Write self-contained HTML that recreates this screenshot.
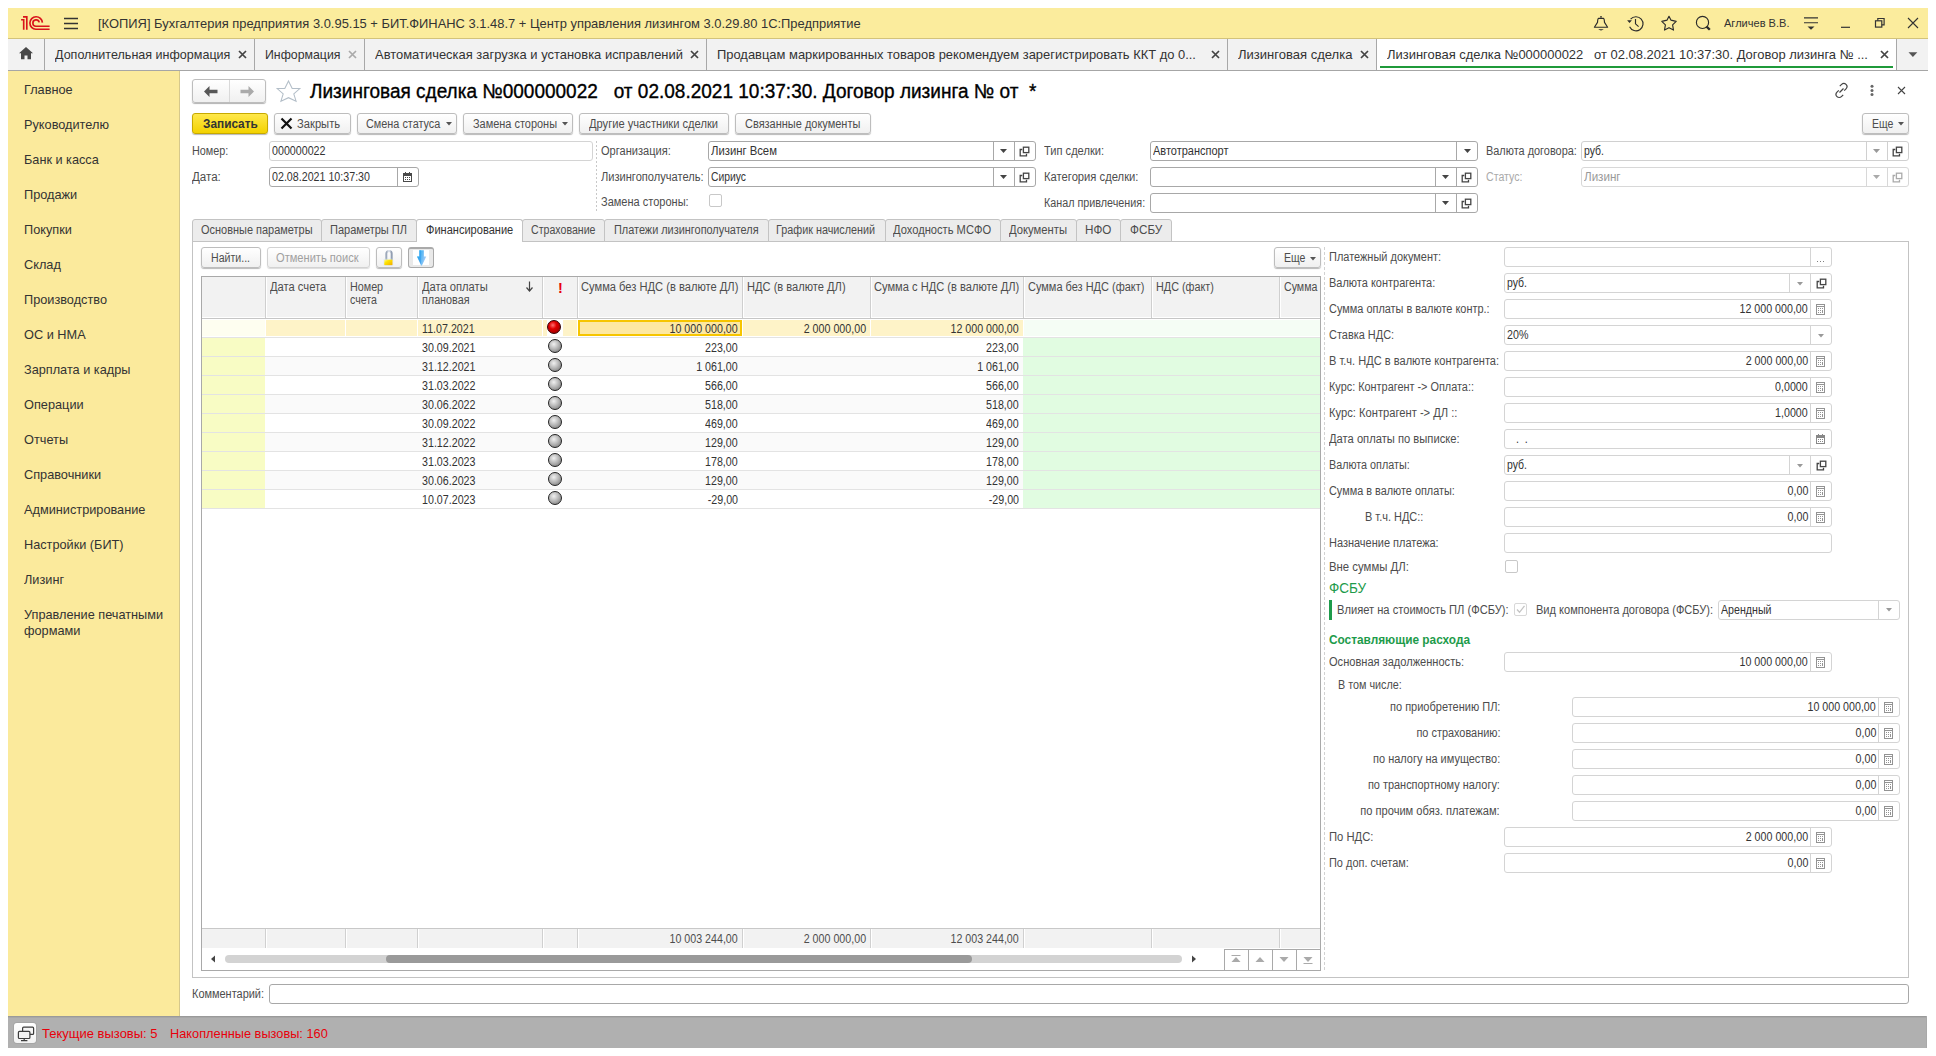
<!DOCTYPE html>
<html><head><meta charset="utf-8"><style>
html,body{margin:0;padding:0;background:#fff;width:1936px;height:1056px;overflow:hidden;position:relative;font-family:"Liberation Sans",sans-serif;}
.r{position:absolute;box-sizing:border-box;}
.t{position:absolute;white-space:pre;line-height:1;}
</style></head><body>
<div class="r" style="left:8px;top:8px;width:1920px;height:30px;background:#fbec9d;"></div>
<div class="r" style="left:8px;top:38px;width:1920px;height:1px;background:#d3c37b;"></div>
<div class="r" style="left:8px;top:39px;width:1920px;height:31px;background:#f2f2f2;"></div>
<div class="r" style="left:8px;top:70px;width:1920px;height:1px;background:#a6a6a6;"></div>
<div class="r" style="left:8px;top:71px;width:171px;height:945px;background:#fbea9c;"></div>
<div class="r" style="left:179px;top:71px;width:1px;height:945px;background:#d6c88c;"></div>
<div class="r" style="left:180px;top:71px;width:1748px;height:945px;background:#fff;"></div>
<div class="r" style="left:8px;top:1016px;width:1919px;height:32px;background:#b0b0b0;"></div>
<div class="r" style="left:1926px;top:1016px;width:1px;height:32px;background:#a9a9a9;"></div>
<div class="r" style="left:8px;top:1016px;width:1918px;height:1px;background:#9a9a9a;"></div>
<div class="r" style="left:8px;top:1017px;width:1918px;height:1px;background:#a7a7a7;"></div>
<div class="t" style="top:16.57px;font-size:13.5px;color:#333;transform:scaleX(0.9564);transform-origin:0 0;left:98px;">[КОПИЯ] Бухгалтерия предприятия 3.0.95.15 + БИТ.ФИНАНС 3.1.48.7 + Центр управления лизингом 3.0.29.80 1С:Предприятие</div>
<div class="t" style="top:17.69px;font-size:11px;color:#333;transform:scaleX(1.0037);transform-origin:0 0;left:1724px;">Агличев В.В.</div>
<div class="r" style="left:1377px;top:39px;width:519px;height:31px;background:#fff;"></div>
<div class="r" style="left:254px;top:39px;width:1px;height:31px;background:#a8a8a8;"></div>
<div class="t" style="top:48.00px;font-size:13px;color:#333;transform:scaleX(0.9651);transform-origin:0 0;left:55px;">Дополнительная информация</div>
<svg class="r" style="left:237.5px;top:49.6px" width="9" height="9" viewBox="0 0 9 9"><path d="M1 1L8 8M8 1L1 8" stroke="#444" stroke-width="1.7"/></svg>
<div class="r" style="left:364px;top:39px;width:1px;height:31px;background:#a8a8a8;"></div>
<div class="t" style="top:48.00px;font-size:13px;color:#333;transform:scaleX(0.9483);transform-origin:0 0;left:265px;">Информация</div>
<svg class="r" style="left:347.5px;top:49.6px" width="9" height="9" viewBox="0 0 9 9"><path d="M1 1L8 8M8 1L1 8" stroke="#aaa" stroke-width="1.7"/></svg>
<div class="r" style="left:706px;top:39px;width:1px;height:31px;background:#a8a8a8;"></div>
<div class="t" style="top:48.00px;font-size:13px;color:#333;transform:scaleX(0.9954);transform-origin:0 0;left:375px;">Автоматическая загрузка и установка исправлений</div>
<svg class="r" style="left:689.5px;top:49.6px" width="9" height="9" viewBox="0 0 9 9"><path d="M1 1L8 8M8 1L1 8" stroke="#444" stroke-width="1.7"/></svg>
<div class="r" style="left:1227px;top:39px;width:1px;height:31px;background:#a8a8a8;"></div>
<div class="t" style="top:48.00px;font-size:13px;color:#333;transform:scaleX(0.9937);transform-origin:0 0;left:717px;">Продавцам маркированных товаров рекомендуем зарегистрировать ККТ до 0...</div>
<svg class="r" style="left:1210.5px;top:49.6px" width="9" height="9" viewBox="0 0 9 9"><path d="M1 1L8 8M8 1L1 8" stroke="#444" stroke-width="1.7"/></svg>
<div class="r" style="left:1376px;top:39px;width:1px;height:31px;background:#a8a8a8;"></div>
<div class="t" style="top:48.00px;font-size:13px;color:#333;transform:scaleX(1.0019);transform-origin:0 0;left:1238px;">Лизинговая сделка</div>
<svg class="r" style="left:1359.5px;top:49.6px" width="9" height="9" viewBox="0 0 9 9"><path d="M1 1L8 8M8 1L1 8" stroke="#444" stroke-width="1.7"/></svg>
<div class="r" style="left:1896px;top:39px;width:1px;height:31px;background:#a8a8a8;"></div>
<div class="t" style="top:48.00px;font-size:13px;color:#333;transform:scaleX(0.9972);transform-origin:0 0;left:1387px;">Лизинговая сделка №000000022   от 02.08.2021 10:37:30. Договор лизинга № ...</div>
<svg class="r" style="left:1879.5px;top:49.6px" width="9" height="9" viewBox="0 0 9 9"><path d="M1 1L8 8M8 1L1 8" stroke="#444" stroke-width="1.7"/></svg>
<div class="r" style="left:44px;top:39px;width:1px;height:31px;background:#a8a8a8;"></div>
<div class="r" style="left:1380px;top:66px;width:513px;height:2px;background:#1f9a3a;"></div>
<div class="t" style="top:1027.00px;font-size:13px;color:#e8000b;letter-spacing:0px;left:42px;">Текущие вызовы: 5</div>
<div class="t" style="top:1027.00px;font-size:13px;color:#e8000b;transform:scaleX(0.9828);transform-origin:0 0;left:170px;">Накопленные вызовы: 160</div>
<div class="t" style="top:83.00px;font-size:13px;color:#333;transform:scaleX(0.9789);transform-origin:0 0;left:24px;">Главное</div>
<div class="t" style="top:118.00px;font-size:13px;color:#333;transform:scaleX(0.9792);transform-origin:0 0;left:24px;">Руководителю</div>
<div class="t" style="top:153.00px;font-size:13px;color:#333;transform:scaleX(0.9765);transform-origin:0 0;left:24px;">Банк и касса</div>
<div class="t" style="top:188.00px;font-size:13px;color:#333;transform:scaleX(0.9807);transform-origin:0 0;left:24px;">Продажи</div>
<div class="t" style="top:223.00px;font-size:13px;color:#333;transform:scaleX(0.9785);transform-origin:0 0;left:24px;">Покупки</div>
<div class="t" style="top:258.00px;font-size:13px;color:#333;transform:scaleX(0.9801);transform-origin:0 0;left:24px;">Склад</div>
<div class="t" style="top:293.00px;font-size:13px;color:#333;transform:scaleX(0.9788);transform-origin:0 0;left:24px;">Производство</div>
<div class="t" style="top:328.00px;font-size:13px;color:#333;transform:scaleX(0.9809);transform-origin:0 0;left:24px;">ОС и НМА</div>
<div class="t" style="top:363.00px;font-size:13px;color:#333;transform:scaleX(0.9779);transform-origin:0 0;left:24px;">Зарплата и кадры</div>
<div class="t" style="top:398.00px;font-size:13px;color:#333;transform:scaleX(0.9803);transform-origin:0 0;left:24px;">Операции</div>
<div class="t" style="top:433.00px;font-size:13px;color:#333;transform:scaleX(0.9800);transform-origin:0 0;left:24px;">Отчеты</div>
<div class="t" style="top:468.00px;font-size:13px;color:#333;transform:scaleX(0.9791);transform-origin:0 0;left:24px;">Справочники</div>
<div class="t" style="top:503.00px;font-size:13px;color:#333;transform:scaleX(0.9794);transform-origin:0 0;left:24px;">Администрирование</div>
<div class="t" style="top:538.00px;font-size:13px;color:#333;transform:scaleX(0.9779);transform-origin:0 0;left:24px;">Настройки (БИТ)</div>
<div class="t" style="top:573.00px;font-size:13px;color:#333;transform:scaleX(0.9780);transform-origin:0 0;left:24px;">Лизинг</div>
<div class="t" style="top:608.00px;font-size:13px;color:#333;transform:scaleX(0.9789);transform-origin:0 0;left:24px;">Управление печатными</div>
<div class="t" style="top:624.00px;font-size:13px;color:#333;transform:scaleX(0.9818);transform-origin:0 0;left:24px;">формами</div>
<div class="t" style="top:81.07px;font-size:20px;color:#000;transform:scaleX(0.9506);transform-origin:0 0;left:310px;-webkit-text-stroke:0.35px #000;">Лизинговая сделка №000000022   от 02.08.2021 10:37:30. Договор лизинга № от  *</div>
<svg class="r" style="left:16px;top:12px" width="40" height="22" viewBox="16 12 40 22"><path d="M21.1 19.7H23.7V29.8M23.0 16.8H26.8V29.8" stroke="#d9131b" stroke-width="1.65" fill="none"/><path d="M42.4 22.6A6.25 6.25 0 1 0 35.9 29.25H49.6" stroke="#d9131b" stroke-width="1.65" fill="none"/><path d="M39.2 22.4A3.2 3.2 0 1 0 35.9 26.25H49.6" stroke="#d9131b" stroke-width="1.65" fill="none"/></svg>
<svg class="r" style="left:63px;top:17px" width="16" height="13" viewBox="0 0 16 13"><path d="M1 1.5H15M1 6.5H15M1 11.5H15" stroke="#333" stroke-width="1.3"/></svg>
<svg class="r" style="left:1590px;top:12px" width="60" height="22" viewBox="1590 12 60 22"><circle cx="1601" cy="16.8" r="0.9" fill="#2b2b2b"/><path d="M1598.5 18.4H1603.5Q1604.3 18.6 1604.5 22.4L1607.6 27.2H1594.4L1597.5 22.4Q1597.7 18.6 1598.5 18.4Z" stroke="#2b2b2b" stroke-width="1.15" fill="none" stroke-linejoin="round"/><path d="M1598.2 29.3H1603.8Q1601 31.6 1598.2 29.3Z" fill="#2b2b2b"/><path d="M1629.6 26.8A7.05 7.05 0 1 0 1630.6 19.2" stroke="#2b2b2b" stroke-width="1.15" fill="none"/><path d="M1627.1 20.2L1631.9 20.3L1629.5 23.1Z" fill="#2b2b2b"/><path d="M1635.5 19.1V23.8L1638.6 26.7" stroke="#2b2b2b" stroke-width="1.15" fill="none"/></svg>
<svg class="r" style="left:1656px;top:12px" width="60" height="22" viewBox="1656 12 60 22"><path d="M1669 16.3L1670.9 20.1L1676.2 21.4L1672.6 24.8L1673.5 30.1L1669 27.7L1664.5 30.1L1665.4 24.8L1661.8 21.4L1667.1 20.1Z" stroke="#2b2b2b" stroke-width="1.15" fill="none" stroke-linejoin="round"/><circle cx="1702.5" cy="22.4" r="6.1" stroke="#2b2b2b" stroke-width="1.15" fill="none"/><path d="M1706.6 26.6L1709.8 29.8" stroke="#2b2b2b" stroke-width="2.3"/></svg>
<svg class="r" style="left:1803px;top:16px" width="16" height="16" viewBox="0 0 16 16"><path d="M1 1.9H15M1 6.8H15" stroke="#333" stroke-width="1.1"/><path d="M4.5 10.5H11.5L8 13.8Z" fill="#333"/></svg>
<svg class="r" style="left:1840px;top:14px" width="12" height="16" viewBox="0 0 12 16"><path d="M1 13.3H10" stroke="#333" stroke-width="1.2"/></svg>
<svg class="r" style="left:1874px;top:17px" width="12" height="12" viewBox="0 0 12 12"><rect x="1.5" y="3.8" width="6.3" height="6.3" stroke="#333" stroke-width="1.2" fill="none"/><path d="M3.8 3.8V1.5H10.1V7.8H7.8" stroke="#333" stroke-width="1.2" fill="none"/></svg>
<svg class="r" style="left:1907px;top:17px" width="12" height="12" viewBox="0 0 12 12"><path d="M1 1L11 11M11 1L1 11" stroke="#333" stroke-width="1.1"/></svg>
<svg class="r" style="left:18px;top:46px" width="16" height="14" viewBox="0 0 16 14"><path d="M8 1L15 7.3H13V13.3H9.5V9.5H6.5V13.3H3V7.3H1Z" fill="#484848"/></svg>
<svg class="r" style="left:1907.5px;top:52px" width="10" height="6" viewBox="0 0 10 6"><path d="M0.5 0.2H9.3L4.9 5Z" fill="#555"/></svg>
<div class="r" style="left:192px;top:79px;width:74px;height:24px;border:1px solid #bdbdbd;border-radius:3px;background:linear-gradient(#fff,#f0f0f0);box-shadow:0 1px 1px rgba(0,0,0,0.3);"></div>
<div class="r" style="left:229px;top:80px;width:1px;height:22px;background:#d9d9d9;"></div>
<svg class="r" style="left:203px;top:85px" width="16" height="13" viewBox="0 0 16 13"><path d="M1 6.5L6.5 1V4.7H14.5V8.3H6.5V12Z" fill="#575757"/></svg>
<svg class="r" style="left:239px;top:85px" width="16" height="13" viewBox="0 0 16 13"><path d="M15 6.5L9.5 1V4.7H1.5V8.3H9.5V12Z" fill="#aaaaaa"/></svg>
<svg class="r" style="left:270px;top:76px" width="36" height="30" viewBox="270 76 36 30"><path d="M288.5 80.9L292.2 88.4L299.8 88.6L293.8 93.8L296.1 101.2L288.5 97.7L280.9 101.2L283.2 93.8L277.2 88.6L284.8 88.4Z" stroke="#b3bec8" stroke-width="1.05" fill="none" stroke-linejoin="miter"/></svg>
<div class="r" style="left:192px;top:113px;width:76px;height:21px;border:1px solid #c7a900;border-radius:3px;background:linear-gradient(#ffe84a,#f3d200);box-shadow:0 1px 1px rgba(0,0,0,0.28);"></div>
<div class="t" style="top:117.84px;font-size:12px;color:#333;transform:scaleX(0.9856);transform-origin:0 0;font-weight:bold;left:203px;">Записать</div>
<div class="r" style="left:274px;top:113px;width:77px;height:21px;border:1px solid #bdbdbd;border-radius:3px;background:linear-gradient(#fff,#f0f0f0);box-shadow:0 1px 1px rgba(0,0,0,0.28);"></div>
<svg class="r" style="left:280px;top:117px" width="13" height="13" viewBox="0 0 13 13"><path d="M1.5 1.5L11.5 11.5M11.5 1.5L1.5 11.5" stroke="#111" stroke-width="2.2"/></svg>
<div class="t" style="top:117.84px;font-size:12px;color:#4d4d4d;transform:scaleX(0.9325);transform-origin:0 0;left:297px;">Закрыть</div>
<div class="r" style="left:357px;top:113px;width:100px;height:21px;border:1px solid #bdbdbd;border-radius:3px;background:linear-gradient(#fff,#f0f0f0);box-shadow:0 1px 1px rgba(0,0,0,0.28);"></div>
<div class="t" style="top:117.84px;font-size:12px;color:#4d4d4d;transform:scaleX(0.9044);transform-origin:0 0;left:366px;">Смена статуса</div>
<svg class="r" style="left:445.5px;top:122.2px" width="6" height="3.5" viewBox="0 0 6 3.5"><path d="M0 0H6L3.0 3.5Z" fill="#555"/></svg>
<div class="r" style="left:463px;top:113px;width:110px;height:21px;border:1px solid #bdbdbd;border-radius:3px;background:linear-gradient(#fff,#f0f0f0);box-shadow:0 1px 1px rgba(0,0,0,0.28);"></div>
<div class="t" style="top:117.84px;font-size:12px;color:#4d4d4d;transform:scaleX(0.9121);transform-origin:0 0;left:473px;">Замена стороны</div>
<svg class="r" style="left:561.5px;top:122.2px" width="6" height="3.5" viewBox="0 0 6 3.5"><path d="M0 0H6L3.0 3.5Z" fill="#555"/></svg>
<div class="r" style="left:579px;top:113px;width:150px;height:21px;border:1px solid #bdbdbd;border-radius:3px;background:linear-gradient(#fff,#f0f0f0);box-shadow:0 1px 1px rgba(0,0,0,0.28);"></div>
<div class="t" style="top:117.84px;font-size:12px;color:#4d4d4d;transform:scaleX(0.9281);transform-origin:0 0;left:589px;">Другие участники сделки</div>
<div class="r" style="left:735px;top:113px;width:136px;height:21px;border:1px solid #bdbdbd;border-radius:3px;background:linear-gradient(#fff,#f0f0f0);box-shadow:0 1px 1px rgba(0,0,0,0.28);"></div>
<div class="t" style="top:117.84px;font-size:12px;color:#4d4d4d;transform:scaleX(0.9147);transform-origin:0 0;left:745px;">Связанные документы</div>
<div class="r" style="left:1862px;top:113px;width:47px;height:21px;border:1px solid #bdbdbd;border-radius:3px;background:linear-gradient(#fff,#f0f0f0);box-shadow:0 1px 1px rgba(0,0,0,0.28);"></div>
<div class="t" style="top:117.84px;font-size:12px;color:#4d4d4d;transform:scaleX(0.8771);transform-origin:0 0;left:1872px;">Еще</div>
<svg class="r" style="left:1897.5px;top:122.2px" width="6" height="3.5" viewBox="0 0 6 3.5"><path d="M0 0H6L3.0 3.5Z" fill="#555"/></svg>
<div class="t" style="top:144.84px;font-size:12px;color:#4d4d4d;transform:scaleX(0.9015);transform-origin:0 0;left:192px;">Номер:</div>
<div class="r" style="left:269px;top:141px;width:324px;height:20px;border:1px solid #d4d4d4;border-radius:3px;background:#fff;"></div>
<div class="t" style="top:144.84px;font-size:12px;color:#333;transform:scaleX(0.8900);transform-origin:0 0;left:272px;">000000022</div>
<div class="t" style="top:170.84px;font-size:12px;color:#4d4d4d;transform:scaleX(0.9635);transform-origin:0 0;left:192px;">Дата:</div>
<div class="r" style="left:269px;top:167px;width:150px;height:20px;border:1px solid #a8a8a8;border-radius:3px;background:#fff;"></div>
<div class="r" style="left:397px;top:168px;width:1px;height:18px;background:#a8a8a8;"></div>
<div class="t" style="top:170.84px;font-size:12px;color:#333;transform:scaleX(0.8900);transform-origin:0 0;left:272px;">02.08.2021 10:37:30</div>
<svg class="r" style="left:403px;top:172px" width="9" height="10" viewBox="0 0 9 10" shape-rendering="crispEdges"><path d="M0 1H9V10H0ZM1 4V9H8V4Z" fill="#4a4a4a" fill-rule="evenodd"/><path d="M2 0h1v1h-1zM6 0h1v1h-1z" fill="#4a4a4a"/><path d="M2 5h1v1h-1zM4 5h1v1h-1zM6 5h1v1h-1zM2 7h1v1h-1zM4 7h1v1h-1zM6 7h1v1h-1z" fill="#4a4a4a"/></svg>
<div class="r" style="left:596px;top:141px;width:1px;height:70px;background:repeating-linear-gradient(#c8c8c8 0 2px,transparent 2px 4px);"></div>
<div class="t" style="top:144.84px;font-size:12px;color:#4d4d4d;transform:scaleX(0.9209);transform-origin:0 0;left:601px;">Организация:</div>
<div class="r" style="left:708px;top:141px;width:328px;height:20px;border:1px solid #a8a8a8;border-radius:3px;background:#fff;"></div>
<div class="r" style="left:993px;top:142px;width:1px;height:18px;background:#a8a8a8;"></div>
<div class="r" style="left:1014px;top:142px;width:1px;height:18px;background:#a8a8a8;"></div>
<div class="t" style="top:144.84px;font-size:12px;color:#333;transform:scaleX(0.9410);transform-origin:0 0;left:711px;">Лизинг Всем</div>
<svg class="r" style="left:1000.0px;top:149.0px" width="7" height="4.0" viewBox="0 0 7 4.0"><path d="M0 0H7L3.5 4.0Z" fill="#444"/></svg>
<svg class="r" style="left:1019px;top:146px" width="11" height="11" viewBox="0 0 11 11"><path d="M3.3 3.5H1.2V9.8H7.5V7.7" stroke="#444" stroke-width="1.3" fill="none"/><rect x="4.4" y="1.2" width="5.4" height="5.4" stroke="#444" stroke-width="1.3" fill="none"/></svg>
<div class="t" style="top:170.84px;font-size:12px;color:#4d4d4d;transform:scaleX(0.9237);transform-origin:0 0;left:601px;">Лизингополучатель:</div>
<div class="r" style="left:708px;top:167px;width:328px;height:20px;border:1px solid #a8a8a8;border-radius:3px;background:#fff;"></div>
<div class="r" style="left:993px;top:168px;width:1px;height:18px;background:#a8a8a8;"></div>
<div class="r" style="left:1014px;top:168px;width:1px;height:18px;background:#a8a8a8;"></div>
<div class="t" style="top:170.84px;font-size:12px;color:#333;transform:scaleX(0.8594);transform-origin:0 0;left:711px;">Сириус</div>
<svg class="r" style="left:1000.0px;top:175.0px" width="7" height="4.0" viewBox="0 0 7 4.0"><path d="M0 0H7L3.5 4.0Z" fill="#444"/></svg>
<svg class="r" style="left:1019px;top:172px" width="11" height="11" viewBox="0 0 11 11"><path d="M3.3 3.5H1.2V9.8H7.5V7.7" stroke="#444" stroke-width="1.3" fill="none"/><rect x="4.4" y="1.2" width="5.4" height="5.4" stroke="#444" stroke-width="1.3" fill="none"/></svg>
<div class="t" style="top:195.84px;font-size:12px;color:#4d4d4d;transform:scaleX(0.9180);transform-origin:0 0;left:601px;">Замена стороны:</div>
<div class="r" style="left:709px;top:194px;width:13px;height:13px;border:1px solid #c8c8c8;border-radius:2px;background:#fff;"></div>
<div class="t" style="top:144.84px;font-size:12px;color:#4d4d4d;transform:scaleX(0.9246);transform-origin:0 0;left:1044px;">Тип сделки:</div>
<div class="r" style="left:1150px;top:141px;width:328px;height:20px;border:1px solid #a8a8a8;border-radius:3px;background:#fff;"></div>
<div class="r" style="left:1456px;top:142px;width:1px;height:18px;background:#a8a8a8;"></div>
<div class="t" style="top:144.84px;font-size:12px;color:#333;transform:scaleX(0.9160);transform-origin:0 0;left:1153px;">Автотранспорт</div>
<svg class="r" style="left:1463.5px;top:149.0px" width="7" height="4.0" viewBox="0 0 7 4.0"><path d="M0 0H7L3.5 4.0Z" fill="#444"/></svg>
<div class="t" style="top:170.84px;font-size:12px;color:#4d4d4d;transform:scaleX(0.9349);transform-origin:0 0;left:1044px;">Категория сделки:</div>
<div class="r" style="left:1150px;top:167px;width:328px;height:20px;border:1px solid #a8a8a8;border-radius:3px;background:#fff;"></div>
<div class="r" style="left:1435px;top:168px;width:1px;height:18px;background:#a8a8a8;"></div>
<div class="r" style="left:1456px;top:168px;width:1px;height:18px;background:#a8a8a8;"></div>
<svg class="r" style="left:1442.0px;top:175.0px" width="7" height="4.0" viewBox="0 0 7 4.0"><path d="M0 0H7L3.5 4.0Z" fill="#444"/></svg>
<svg class="r" style="left:1461px;top:172px" width="11" height="11" viewBox="0 0 11 11"><path d="M3.3 3.5H1.2V9.8H7.5V7.7" stroke="#444" stroke-width="1.3" fill="none"/><rect x="4.4" y="1.2" width="5.4" height="5.4" stroke="#444" stroke-width="1.3" fill="none"/></svg>
<div class="t" style="top:196.84px;font-size:12px;color:#4d4d4d;transform:scaleX(0.8978);transform-origin:0 0;left:1044px;">Канал привлечения:</div>
<div class="r" style="left:1150px;top:193px;width:328px;height:20px;border:1px solid #a8a8a8;border-radius:3px;background:#fff;"></div>
<div class="r" style="left:1435px;top:194px;width:1px;height:18px;background:#a8a8a8;"></div>
<div class="r" style="left:1456px;top:194px;width:1px;height:18px;background:#a8a8a8;"></div>
<svg class="r" style="left:1442.0px;top:201.0px" width="7" height="4.0" viewBox="0 0 7 4.0"><path d="M0 0H7L3.5 4.0Z" fill="#444"/></svg>
<svg class="r" style="left:1461px;top:198px" width="11" height="11" viewBox="0 0 11 11"><path d="M3.3 3.5H1.2V9.8H7.5V7.7" stroke="#444" stroke-width="1.3" fill="none"/><rect x="4.4" y="1.2" width="5.4" height="5.4" stroke="#444" stroke-width="1.3" fill="none"/></svg>
<div class="t" style="top:144.84px;font-size:12px;color:#4d4d4d;transform:scaleX(0.9098);transform-origin:0 0;left:1486px;">Валюта договора:</div>
<div class="r" style="left:1581px;top:141px;width:328px;height:20px;border:1px solid #d0d0d0;border-radius:3px;background:#fff;"></div>
<div class="r" style="left:1866px;top:142px;width:1px;height:18px;background:#d0d0d0;"></div>
<div class="r" style="left:1887px;top:142px;width:1px;height:18px;background:#d0d0d0;"></div>
<div class="t" style="top:144.84px;font-size:12px;color:#333;transform:scaleX(0.8699);transform-origin:0 0;left:1584px;">руб.</div>
<svg class="r" style="left:1873.0px;top:149.0px" width="7" height="4.0" viewBox="0 0 7 4.0"><path d="M0 0H7L3.5 4.0Z" fill="#999"/></svg>
<svg class="r" style="left:1892px;top:146px" width="11" height="11" viewBox="0 0 11 11"><path d="M3.3 3.5H1.2V9.8H7.5V7.7" stroke="#444" stroke-width="1.3" fill="none"/><rect x="4.4" y="1.2" width="5.4" height="5.4" stroke="#444" stroke-width="1.3" fill="none"/></svg>
<div class="t" style="top:170.84px;font-size:12px;color:#aaa;transform:scaleX(0.8845);transform-origin:0 0;left:1486px;">Статус:</div>
<div class="r" style="left:1581px;top:167px;width:328px;height:20px;border:1px solid #d8d8d8;border-radius:3px;background:#fff;"></div>
<div class="r" style="left:1866px;top:168px;width:1px;height:18px;background:#d8d8d8;"></div>
<div class="r" style="left:1887px;top:168px;width:1px;height:18px;background:#d8d8d8;"></div>
<div class="t" style="top:170.84px;font-size:12px;color:#999;transform:scaleX(0.9687);transform-origin:0 0;left:1584px;">Лизинг</div>
<svg class="r" style="left:1873.0px;top:175.0px" width="7" height="4.0" viewBox="0 0 7 4.0"><path d="M0 0H7L3.5 4.0Z" fill="#aaa"/></svg>
<svg class="r" style="left:1892px;top:172px" width="11" height="11" viewBox="0 0 11 11"><path d="M3.3 3.5H1.2V9.8H7.5V7.7" stroke="#aaa" stroke-width="1.3" fill="none"/><rect x="4.4" y="1.2" width="5.4" height="5.4" stroke="#aaa" stroke-width="1.3" fill="none"/></svg>
<svg class="r" style="left:1833px;top:82px" width="17" height="17" viewBox="0 0 17 17"><path d="M6.8 4.2L8.6 2.4A3.1 3.1 0 0 1 13 6.8L11.2 8.6M10.2 12.8L8.4 14.6A3.1 3.1 0 0 1 4 10.2L5.8 8.4M6.5 10.5L10.5 6.5" stroke="#444" stroke-width="1.2" fill="none"/></svg>
<svg class="r" style="left:1869px;top:84px" width="6" height="13" viewBox="0 0 6 13"><circle cx="3" cy="2.3" r="1.5" fill="#666"/><circle cx="3" cy="6.4" r="1.5" fill="#666"/><circle cx="3" cy="10.5" r="1.5" fill="#666"/></svg>
<svg class="r" style="left:1897px;top:86px" width="9" height="9" viewBox="0 0 9 9"><path d="M1 1L8 8M8 1L1 8" stroke="#444" stroke-width="1.1"/></svg>
<div class="r" style="left:192px;top:241px;width:1717px;height:737px;border:1px solid #c3c3c3;background:#fff;"></div>
<div class="r" style="left:192px;top:219px;width:130px;height:23px;border:1px solid #c3c3c3;background:#ececec;border-radius:3px 3px 0 0;"></div>
<div class="t" style="top:223.84px;font-size:12px;color:#4d4d4d;transform:scaleX(0.9132);transform-origin:0 0;left:200.7px;">Основные параметры</div>
<div class="r" style="left:321px;top:219px;width:96px;height:23px;border:1px solid #c3c3c3;background:#ececec;border-radius:3px 3px 0 0;"></div>
<div class="t" style="top:223.84px;font-size:12px;color:#4d4d4d;transform:scaleX(0.9189);transform-origin:0 0;left:330.3px;">Параметры ПЛ</div>
<div class="r" style="left:416px;top:219px;width:107px;height:23px;border:1px solid #c3c3c3;border-bottom:none;background:#fff;border-radius:3px 3px 0 0;"></div>
<div class="t" style="top:223.84px;font-size:12px;color:#333;transform:scaleX(0.9208);transform-origin:0 0;left:426px;">Финансирование</div>
<div class="r" style="left:522px;top:219px;width:83px;height:23px;border:1px solid #c3c3c3;background:#ececec;border-radius:3px 3px 0 0;"></div>
<div class="t" style="top:223.84px;font-size:12px;color:#4d4d4d;transform:scaleX(0.8841);transform-origin:0 0;left:530.5px;">Страхование</div>
<div class="r" style="left:604px;top:219px;width:165px;height:23px;border:1px solid #c3c3c3;background:#ececec;border-radius:3px 3px 0 0;"></div>
<div class="t" style="top:223.84px;font-size:12px;color:#4d4d4d;transform:scaleX(0.9088);transform-origin:0 0;left:613.5px;">Платежи лизингополучателя</div>
<div class="r" style="left:768px;top:219px;width:118px;height:23px;border:1px solid #c3c3c3;background:#ececec;border-radius:3px 3px 0 0;"></div>
<div class="t" style="top:223.84px;font-size:12px;color:#4d4d4d;transform:scaleX(0.9008);transform-origin:0 0;left:776px;">График начислений</div>
<div class="r" style="left:885px;top:219px;width:116px;height:23px;border:1px solid #c3c3c3;background:#ececec;border-radius:3px 3px 0 0;"></div>
<div class="t" style="top:223.84px;font-size:12px;color:#4d4d4d;transform:scaleX(0.9293);transform-origin:0 0;left:893px;">Доходность МСФО</div>
<div class="r" style="left:1000px;top:219px;width:77px;height:23px;border:1px solid #c3c3c3;background:#ececec;border-radius:3px 3px 0 0;"></div>
<div class="t" style="top:223.84px;font-size:12px;color:#4d4d4d;transform:scaleX(0.9376);transform-origin:0 0;left:1009px;">Документы</div>
<div class="r" style="left:1076px;top:219px;width:45px;height:23px;border:1px solid #c3c3c3;background:#ececec;border-radius:3px 3px 0 0;"></div>
<div class="t" style="top:223.84px;font-size:12px;color:#4d4d4d;transform:scaleX(0.9733);transform-origin:0 0;left:1085px;">НФО</div>
<div class="r" style="left:1120px;top:219px;width:52px;height:23px;border:1px solid #c3c3c3;background:#ececec;border-radius:3px 3px 0 0;"></div>
<div class="t" style="top:223.84px;font-size:12px;color:#4d4d4d;transform:scaleX(0.9783);transform-origin:0 0;left:1129.5px;">ФСБУ</div>
<div class="r" style="left:201px;top:247px;width:60px;height:21px;border:1px solid #bdbdbd;border-radius:3px;background:linear-gradient(#fff,#f0f0f0);box-shadow:0 1px 1px rgba(0,0,0,0.28);"></div>
<div class="t" style="top:251.84px;font-size:12px;color:#4d4d4d;transform:scaleX(0.8817);transform-origin:0 0;left:211px;">Найти...</div>
<div class="r" style="left:267px;top:247px;width:103px;height:21px;border:1px solid #bdbdbd;border-radius:3px;background:linear-gradient(#fff,#f0f0f0);box-shadow:0 1px 1px rgba(0,0,0,0.28);border-color:#d2d2d2;box-shadow:0 1px 1px rgba(0,0,0,0.14);"></div>
<div class="t" style="top:251.84px;font-size:12px;color:#a0a0a0;transform:scaleX(0.9252);transform-origin:0 0;left:276px;">Отменить поиск</div>
<div class="r" style="left:376px;top:247px;width:26px;height:21px;border:1px solid #bdbdbd;border-radius:3px;background:linear-gradient(#fff,#f0f0f0);box-shadow:0 1px 1px rgba(0,0,0,0.28);"></div>
<svg class="r" style="left:376px;top:247px" width="26" height="21" viewBox="376 247 26 21"><defs><linearGradient id="lg1" x1="0" y1="0" x2="1" y2="0"><stop offset="0" stop-color="#9aa6b8"/><stop offset="0.5" stop-color="#e6ebf2"/><stop offset="1" stop-color="#8e9bb0"/></linearGradient><linearGradient id="lg2" x1="0" y1="0" x2="1" y2="1"><stop offset="0" stop-color="#fff8a0"/><stop offset="0.35" stop-color="#ffe600"/><stop offset="1" stop-color="#f2a800"/></linearGradient></defs><path d="M386.4 260V253.6A2.6 2.6 0 0 1 391.6 253.6V260" stroke="url(#lg1)" stroke-width="2.1" fill="none"/><rect x="384.2" y="259.6" width="8.4" height="5.6" rx="0.6" fill="url(#lg2)"/><rect x="383.7" y="259.1" width="9.4" height="6.6" rx="1" fill="none" stroke="#cfe2ff" stroke-width="0.6" opacity="0.7"/></svg>
<div class="r" style="left:408px;top:247px;width:26px;height:21px;border:1px solid #a9a9a9;border-top:2px solid #aaa;border-radius:3px;background:#e9e9e9;"></div>
<div class="r" style="left:413px;top:250px;width:16px;height:15px;background:#fff;"></div>
<svg class="r" style="left:408px;top:247px" width="26" height="21" viewBox="408 247 26 21"><defs><linearGradient id="ag1" x1="0" y1="0" x2="1" y2="0.3"><stop offset="0" stop-color="#1ec8f6"/><stop offset="0.5" stop-color="#55b6f4"/><stop offset="1" stop-color="#a9cdf7"/></linearGradient></defs><path d="M419.3 250.2H423.9V256.5H426.3L421.7 266L417 256.5H419.3Z" fill="url(#ag1)"/><path d="M419.3 250.2H421V265.5L417 256.5H419.3Z" fill="#2f95ea" opacity="0.55"/></svg>
<div class="r" style="left:1274px;top:247px;width:47px;height:21px;border:1px solid #bdbdbd;border-radius:3px;background:linear-gradient(#fff,#f0f0f0);box-shadow:0 1px 1px rgba(0,0,0,0.28);"></div>
<div class="t" style="top:251.84px;font-size:12px;color:#4d4d4d;transform:scaleX(0.8771);transform-origin:0 0;left:1284px;">Еще</div>
<svg class="r" style="left:1309.5px;top:257.1px" width="6" height="3.5" viewBox="0 0 6 3.5"><path d="M0 0H6L3.0 3.5Z" fill="#555"/></svg>
<div class="r" style="left:201px;top:276px;width:1120px;height:695px;border:1px solid #a9a9a9;background:#fff;"></div>
<div class="r" style="left:202px;top:277px;width:1118px;height:40px;background:#f2f2f2;"></div>
<div class="r" style="left:202px;top:317px;width:1118px;height:1px;background:#fff;"></div>
<div class="r" style="left:202px;top:318px;width:1118px;height:1px;background:#c6c6c6;"></div>
<div class="r" style="left:265px;top:277px;width:1px;height:41px;background:#cfcfcf;"></div>
<div class="r" style="left:266px;top:277px;width:1px;height:41px;background:#fff;"></div>
<div class="r" style="left:345px;top:277px;width:1px;height:41px;background:#cfcfcf;"></div>
<div class="r" style="left:346px;top:277px;width:1px;height:41px;background:#fff;"></div>
<div class="r" style="left:417px;top:277px;width:1px;height:41px;background:#cfcfcf;"></div>
<div class="r" style="left:418px;top:277px;width:1px;height:41px;background:#fff;"></div>
<div class="r" style="left:542px;top:277px;width:1px;height:41px;background:#cfcfcf;"></div>
<div class="r" style="left:543px;top:277px;width:1px;height:41px;background:#fff;"></div>
<div class="r" style="left:577px;top:277px;width:1px;height:41px;background:#cfcfcf;"></div>
<div class="r" style="left:578px;top:277px;width:1px;height:41px;background:#fff;"></div>
<div class="r" style="left:742px;top:277px;width:1px;height:41px;background:#cfcfcf;"></div>
<div class="r" style="left:743px;top:277px;width:1px;height:41px;background:#fff;"></div>
<div class="r" style="left:870px;top:277px;width:1px;height:41px;background:#cfcfcf;"></div>
<div class="r" style="left:871px;top:277px;width:1px;height:41px;background:#fff;"></div>
<div class="r" style="left:1023px;top:277px;width:1px;height:41px;background:#cfcfcf;"></div>
<div class="r" style="left:1024px;top:277px;width:1px;height:41px;background:#fff;"></div>
<div class="r" style="left:1151px;top:277px;width:1px;height:41px;background:#cfcfcf;"></div>
<div class="r" style="left:1152px;top:277px;width:1px;height:41px;background:#fff;"></div>
<div class="r" style="left:1279px;top:277px;width:1px;height:41px;background:#cfcfcf;"></div>
<div class="r" style="left:1280px;top:277px;width:1px;height:41px;background:#fff;"></div>
<div class="t" style="top:280.84px;font-size:12px;color:#4d4d4d;transform:scaleX(0.9318);transform-origin:0 0;left:270px;">Дата счета</div>
<div class="t" style="top:280.84px;font-size:12px;color:#4d4d4d;transform:scaleX(0.8961);transform-origin:0 0;left:350px;">Номер</div>
<div class="t" style="top:293.84px;font-size:12px;color:#4d4d4d;transform:scaleX(0.8842);transform-origin:0 0;left:350px;">счета</div>
<div class="t" style="top:280.84px;font-size:12px;color:#4d4d4d;transform:scaleX(0.9307);transform-origin:0 0;left:422px;">Дата оплаты</div>
<div class="t" style="top:293.84px;font-size:12px;color:#4d4d4d;transform:scaleX(0.8983);transform-origin:0 0;left:422px;">плановая</div>
<svg class="r" style="left:526px;top:281px" width="7" height="11" viewBox="0 0 7 11"><path d="M3.5 0.5V9.5" stroke="#444" stroke-width="1.2"/><path d="M0.5 6.5L3.5 10L6.5 6.5" stroke="#444" stroke-width="1.2" fill="none"/></svg>
<div class="t" style="top:280.73px;font-size:14.5px;color:#e8000b;letter-spacing:0px;font-weight:bold;left:260.5px;width:600px;text-align:center;">!</div>
<div class="t" style="top:280.84px;font-size:12px;color:#4d4d4d;transform:scaleX(0.9280);transform-origin:0 0;left:581px;">Сумма без НДС (в валюте ДЛ)</div>
<div class="t" style="top:280.84px;font-size:12px;color:#4d4d4d;transform:scaleX(0.9258);transform-origin:0 0;left:747px;">НДС (в валюте ДЛ)</div>
<div class="t" style="top:280.84px;font-size:12px;color:#4d4d4d;transform:scaleX(0.9257);transform-origin:0 0;left:874px;">Сумма с НДС (в валюте ДЛ)</div>
<div class="t" style="top:280.84px;font-size:12px;color:#4d4d4d;transform:scaleX(0.9148);transform-origin:0 0;left:1028px;">Сумма без НДС (факт)</div>
<div class="t" style="top:280.84px;font-size:12px;color:#4d4d4d;transform:scaleX(0.9014);transform-origin:0 0;left:1156px;">НДС (факт)</div>
<div class="t" style="top:280.84px;font-size:12px;color:#4d4d4d;transform:scaleX(0.8859);transform-origin:0 0;left:1284px;">Сумма</div>
<div class="r" style="left:202px;top:320px;width:63px;height:16px;background:#fefef0;"></div>
<div class="r" style="left:266px;top:320px;width:757px;height:16px;background:#fef3c8;"></div>
<div class="r" style="left:1024px;top:320px;width:296px;height:16px;background:#f5fdf5;"></div>
<div class="r" style="left:345px;top:319px;width:1px;height:18px;background:#fff;"></div>
<div class="r" style="left:417px;top:319px;width:1px;height:18px;background:#fff;"></div>
<div class="r" style="left:542px;top:319px;width:1px;height:18px;background:#fff;"></div>
<div class="r" style="left:577px;top:319px;width:1px;height:18px;background:#fff;"></div>
<div class="r" style="left:742px;top:319px;width:1px;height:18px;background:#fff;"></div>
<div class="r" style="left:870px;top:319px;width:1px;height:18px;background:#fff;"></div>
<div class="r" style="left:1023px;top:319px;width:1px;height:18px;background:#fff;"></div>
<div class="r" style="left:547px;top:319px;width:16px;height:18px;background:#fff;"></div>
<div class="r" style="left:578px;top:320px;width:164px;height:16px;border:2px solid #f6c500;background:#fde8a2;"></div>
<div class="r" style="left:202px;top:337px;width:1118px;height:1px;background:#e3e3e3;"></div>
<div class="t" style="top:322.84px;font-size:12px;color:#333;transform:scaleX(0.8900);transform-origin:0 0;left:422px;">11.07.2021</div>
<div class="t" style="top:322.84px;font-size:12px;color:#333;transform:scaleX(0.8900);transform-origin:100% 0;right:1198.3px;">10 000 000,00</div>
<div class="t" style="top:322.84px;font-size:12px;color:#333;transform:scaleX(0.8900);transform-origin:100% 0;right:1070px;">2 000 000,00</div>
<div class="t" style="top:322.84px;font-size:12px;color:#333;transform:scaleX(0.8900);transform-origin:100% 0;right:917px;">12 000 000,00</div>
<div class="r" style="left:547px;top:320px;width:14px;height:14px;border-radius:50%;border:1px solid #300;background:radial-gradient(circle at 40% 35%,#ff7070 0,#e00000 35%,#a00000 80%);"></div>
<div class="r" style="left:202px;top:338px;width:63px;height:18px;background:#f8fcc4;"></div>
<div class="r" style="left:265px;top:338px;width:758px;height:18px;background:#ffffff;"></div>
<div class="r" style="left:1023px;top:338px;width:297px;height:18px;background:#e1fce1;"></div>
<div class="r" style="left:202px;top:356px;width:1118px;height:1px;background:#e3e3e3;"></div>
<div class="t" style="top:341.84px;font-size:12px;color:#333;transform:scaleX(0.8900);transform-origin:0 0;left:422px;">30.09.2021</div>
<div class="t" style="top:341.84px;font-size:12px;color:#333;transform:scaleX(0.8900);transform-origin:100% 0;right:1198.3px;">223,00</div>
<div class="t" style="top:341.84px;font-size:12px;color:#333;transform:scaleX(0.8900);transform-origin:100% 0;right:917px;">223,00</div>
<div class="r" style="left:548px;top:339px;width:14px;height:14px;border-radius:50%;border:1px solid #222;background:radial-gradient(circle at 40% 35%,#f0f0f0 0,#b8b8b8 45%,#7a7a7a 90%);"></div>
<div class="r" style="left:202px;top:357px;width:63px;height:18px;background:#f8fcc4;"></div>
<div class="r" style="left:265px;top:357px;width:758px;height:18px;background:#fafafa;"></div>
<div class="r" style="left:1023px;top:357px;width:297px;height:18px;background:#e1fce1;"></div>
<div class="r" style="left:202px;top:375px;width:1118px;height:1px;background:#e3e3e3;"></div>
<div class="t" style="top:360.84px;font-size:12px;color:#333;transform:scaleX(0.8900);transform-origin:0 0;left:422px;">31.12.2021</div>
<div class="t" style="top:360.84px;font-size:12px;color:#333;transform:scaleX(0.8900);transform-origin:100% 0;right:1198.3px;">1 061,00</div>
<div class="t" style="top:360.84px;font-size:12px;color:#333;transform:scaleX(0.8900);transform-origin:100% 0;right:917px;">1 061,00</div>
<div class="r" style="left:548px;top:358px;width:14px;height:14px;border-radius:50%;border:1px solid #222;background:radial-gradient(circle at 40% 35%,#f0f0f0 0,#b8b8b8 45%,#7a7a7a 90%);"></div>
<div class="r" style="left:202px;top:376px;width:63px;height:18px;background:#f8fcc4;"></div>
<div class="r" style="left:265px;top:376px;width:758px;height:18px;background:#ffffff;"></div>
<div class="r" style="left:1023px;top:376px;width:297px;height:18px;background:#e1fce1;"></div>
<div class="r" style="left:202px;top:394px;width:1118px;height:1px;background:#e3e3e3;"></div>
<div class="t" style="top:379.84px;font-size:12px;color:#333;transform:scaleX(0.8900);transform-origin:0 0;left:422px;">31.03.2022</div>
<div class="t" style="top:379.84px;font-size:12px;color:#333;transform:scaleX(0.8900);transform-origin:100% 0;right:1198.3px;">566,00</div>
<div class="t" style="top:379.84px;font-size:12px;color:#333;transform:scaleX(0.8900);transform-origin:100% 0;right:917px;">566,00</div>
<div class="r" style="left:548px;top:377px;width:14px;height:14px;border-radius:50%;border:1px solid #222;background:radial-gradient(circle at 40% 35%,#f0f0f0 0,#b8b8b8 45%,#7a7a7a 90%);"></div>
<div class="r" style="left:202px;top:395px;width:63px;height:18px;background:#f8fcc4;"></div>
<div class="r" style="left:265px;top:395px;width:758px;height:18px;background:#fafafa;"></div>
<div class="r" style="left:1023px;top:395px;width:297px;height:18px;background:#e1fce1;"></div>
<div class="r" style="left:202px;top:413px;width:1118px;height:1px;background:#e3e3e3;"></div>
<div class="t" style="top:398.84px;font-size:12px;color:#333;transform:scaleX(0.8900);transform-origin:0 0;left:422px;">30.06.2022</div>
<div class="t" style="top:398.84px;font-size:12px;color:#333;transform:scaleX(0.8900);transform-origin:100% 0;right:1198.3px;">518,00</div>
<div class="t" style="top:398.84px;font-size:12px;color:#333;transform:scaleX(0.8900);transform-origin:100% 0;right:917px;">518,00</div>
<div class="r" style="left:548px;top:396px;width:14px;height:14px;border-radius:50%;border:1px solid #222;background:radial-gradient(circle at 40% 35%,#f0f0f0 0,#b8b8b8 45%,#7a7a7a 90%);"></div>
<div class="r" style="left:202px;top:414px;width:63px;height:18px;background:#f8fcc4;"></div>
<div class="r" style="left:265px;top:414px;width:758px;height:18px;background:#ffffff;"></div>
<div class="r" style="left:1023px;top:414px;width:297px;height:18px;background:#e1fce1;"></div>
<div class="r" style="left:202px;top:432px;width:1118px;height:1px;background:#e3e3e3;"></div>
<div class="t" style="top:417.84px;font-size:12px;color:#333;transform:scaleX(0.8900);transform-origin:0 0;left:422px;">30.09.2022</div>
<div class="t" style="top:417.84px;font-size:12px;color:#333;transform:scaleX(0.8900);transform-origin:100% 0;right:1198.3px;">469,00</div>
<div class="t" style="top:417.84px;font-size:12px;color:#333;transform:scaleX(0.8900);transform-origin:100% 0;right:917px;">469,00</div>
<div class="r" style="left:548px;top:415px;width:14px;height:14px;border-radius:50%;border:1px solid #222;background:radial-gradient(circle at 40% 35%,#f0f0f0 0,#b8b8b8 45%,#7a7a7a 90%);"></div>
<div class="r" style="left:202px;top:433px;width:63px;height:18px;background:#f8fcc4;"></div>
<div class="r" style="left:265px;top:433px;width:758px;height:18px;background:#fafafa;"></div>
<div class="r" style="left:1023px;top:433px;width:297px;height:18px;background:#e1fce1;"></div>
<div class="r" style="left:202px;top:451px;width:1118px;height:1px;background:#e3e3e3;"></div>
<div class="t" style="top:436.84px;font-size:12px;color:#333;transform:scaleX(0.8900);transform-origin:0 0;left:422px;">31.12.2022</div>
<div class="t" style="top:436.84px;font-size:12px;color:#333;transform:scaleX(0.8900);transform-origin:100% 0;right:1198.3px;">129,00</div>
<div class="t" style="top:436.84px;font-size:12px;color:#333;transform:scaleX(0.8900);transform-origin:100% 0;right:917px;">129,00</div>
<div class="r" style="left:548px;top:434px;width:14px;height:14px;border-radius:50%;border:1px solid #222;background:radial-gradient(circle at 40% 35%,#f0f0f0 0,#b8b8b8 45%,#7a7a7a 90%);"></div>
<div class="r" style="left:202px;top:452px;width:63px;height:18px;background:#f8fcc4;"></div>
<div class="r" style="left:265px;top:452px;width:758px;height:18px;background:#ffffff;"></div>
<div class="r" style="left:1023px;top:452px;width:297px;height:18px;background:#e1fce1;"></div>
<div class="r" style="left:202px;top:470px;width:1118px;height:1px;background:#e3e3e3;"></div>
<div class="t" style="top:455.84px;font-size:12px;color:#333;transform:scaleX(0.8900);transform-origin:0 0;left:422px;">31.03.2023</div>
<div class="t" style="top:455.84px;font-size:12px;color:#333;transform:scaleX(0.8900);transform-origin:100% 0;right:1198.3px;">178,00</div>
<div class="t" style="top:455.84px;font-size:12px;color:#333;transform:scaleX(0.8900);transform-origin:100% 0;right:917px;">178,00</div>
<div class="r" style="left:548px;top:453px;width:14px;height:14px;border-radius:50%;border:1px solid #222;background:radial-gradient(circle at 40% 35%,#f0f0f0 0,#b8b8b8 45%,#7a7a7a 90%);"></div>
<div class="r" style="left:202px;top:471px;width:63px;height:18px;background:#f8fcc4;"></div>
<div class="r" style="left:265px;top:471px;width:758px;height:18px;background:#fafafa;"></div>
<div class="r" style="left:1023px;top:471px;width:297px;height:18px;background:#e1fce1;"></div>
<div class="r" style="left:202px;top:489px;width:1118px;height:1px;background:#e3e3e3;"></div>
<div class="t" style="top:474.84px;font-size:12px;color:#333;transform:scaleX(0.8900);transform-origin:0 0;left:422px;">30.06.2023</div>
<div class="t" style="top:474.84px;font-size:12px;color:#333;transform:scaleX(0.8900);transform-origin:100% 0;right:1198.3px;">129,00</div>
<div class="t" style="top:474.84px;font-size:12px;color:#333;transform:scaleX(0.8900);transform-origin:100% 0;right:917px;">129,00</div>
<div class="r" style="left:548px;top:472px;width:14px;height:14px;border-radius:50%;border:1px solid #222;background:radial-gradient(circle at 40% 35%,#f0f0f0 0,#b8b8b8 45%,#7a7a7a 90%);"></div>
<div class="r" style="left:202px;top:490px;width:63px;height:18px;background:#f8fcc4;"></div>
<div class="r" style="left:265px;top:490px;width:758px;height:18px;background:#ffffff;"></div>
<div class="r" style="left:1023px;top:490px;width:297px;height:18px;background:#e1fce1;"></div>
<div class="r" style="left:202px;top:508px;width:1118px;height:1px;background:#e3e3e3;"></div>
<div class="t" style="top:493.84px;font-size:12px;color:#333;transform:scaleX(0.8900);transform-origin:0 0;left:422px;">10.07.2023</div>
<div class="t" style="top:493.84px;font-size:12px;color:#333;transform:scaleX(0.8900);transform-origin:100% 0;right:1198.3px;">-29,00</div>
<div class="t" style="top:493.84px;font-size:12px;color:#333;transform:scaleX(0.8900);transform-origin:100% 0;right:917px;">-29,00</div>
<div class="r" style="left:548px;top:491px;width:14px;height:14px;border-radius:50%;border:1px solid #222;background:radial-gradient(circle at 40% 35%,#f0f0f0 0,#b8b8b8 45%,#7a7a7a 90%);"></div>
<div class="r" style="left:202px;top:928px;width:1118px;height:1px;background:#c8c8c8;"></div>
<div class="r" style="left:202px;top:929px;width:1118px;height:19px;background:#f2f2f2;"></div>
<div class="r" style="left:265px;top:929px;width:1px;height:19px;background:#d0d0d0;"></div>
<div class="r" style="left:266px;top:929px;width:1px;height:19px;background:#fff;"></div>
<div class="r" style="left:345px;top:929px;width:1px;height:19px;background:#d0d0d0;"></div>
<div class="r" style="left:346px;top:929px;width:1px;height:19px;background:#fff;"></div>
<div class="r" style="left:417px;top:929px;width:1px;height:19px;background:#d0d0d0;"></div>
<div class="r" style="left:418px;top:929px;width:1px;height:19px;background:#fff;"></div>
<div class="r" style="left:542px;top:929px;width:1px;height:19px;background:#d0d0d0;"></div>
<div class="r" style="left:543px;top:929px;width:1px;height:19px;background:#fff;"></div>
<div class="r" style="left:577px;top:929px;width:1px;height:19px;background:#d0d0d0;"></div>
<div class="r" style="left:578px;top:929px;width:1px;height:19px;background:#fff;"></div>
<div class="r" style="left:742px;top:929px;width:1px;height:19px;background:#d0d0d0;"></div>
<div class="r" style="left:743px;top:929px;width:1px;height:19px;background:#fff;"></div>
<div class="r" style="left:870px;top:929px;width:1px;height:19px;background:#d0d0d0;"></div>
<div class="r" style="left:871px;top:929px;width:1px;height:19px;background:#fff;"></div>
<div class="r" style="left:1023px;top:929px;width:1px;height:19px;background:#d0d0d0;"></div>
<div class="r" style="left:1024px;top:929px;width:1px;height:19px;background:#fff;"></div>
<div class="r" style="left:1151px;top:929px;width:1px;height:19px;background:#d0d0d0;"></div>
<div class="r" style="left:1152px;top:929px;width:1px;height:19px;background:#fff;"></div>
<div class="r" style="left:1279px;top:929px;width:1px;height:19px;background:#d0d0d0;"></div>
<div class="r" style="left:1280px;top:929px;width:1px;height:19px;background:#fff;"></div>
<div class="t" style="top:932.84px;font-size:12px;color:#4d4d4d;transform:scaleX(0.8900);transform-origin:100% 0;right:1198.3px;">10 003 244,00</div>
<div class="t" style="top:932.84px;font-size:12px;color:#4d4d4d;transform:scaleX(0.8900);transform-origin:100% 0;right:1070px;">2 000 000,00</div>
<div class="t" style="top:932.84px;font-size:12px;color:#4d4d4d;transform:scaleX(0.8900);transform-origin:100% 0;right:917px;">12 003 244,00</div>
<svg class="r" style="left:210px;top:955px" width="6" height="8" viewBox="0 0 6 8"><path d="M5 0.5V7.5L1 4Z" fill="#444"/></svg>
<div class="r" style="left:225px;top:955px;width:957px;height:8px;background:#d3d3d3;border-radius:4px;"></div>
<div class="r" style="left:386px;top:955px;width:586px;height:8px;background:#9a9a9a;border-radius:4px;"></div>
<svg class="r" style="left:1191px;top:955px" width="6" height="8" viewBox="0 0 6 8"><path d="M1 0.5V7.5L5 4Z" fill="#444"/></svg>
<div class="r" style="left:1224px;top:949px;width:97px;height:22px;border:1px solid #a9a9a9;background:#fff;"></div>
<div class="r" style="left:1248px;top:949px;width:1px;height:22px;background:#a9a9a9;"></div>
<div class="r" style="left:1272px;top:949px;width:1px;height:22px;background:#a9a9a9;"></div>
<div class="r" style="left:1296px;top:949px;width:1px;height:22px;background:#a9a9a9;"></div>
<svg class="r" style="left:1231px;top:955px" width="10" height="8" viewBox="0 0 10 8"><path d="M0.5 0.5H9.5" stroke="#aaa" stroke-width="1"/><path d="M0.5 7H9.5L5 2Z" fill="#aaa"/></svg>
<svg class="r" style="left:1255px;top:955px" width="10" height="8" viewBox="0 0 10 8"><path d="M0.5 7H9.5L5 2Z" fill="#aaa"/></svg>
<svg class="r" style="left:1279px;top:956px" width="10" height="8" viewBox="0 0 10 8"><path d="M0.5 1H9.5L5 6Z" fill="#aaa"/></svg>
<svg class="r" style="left:1303px;top:956px" width="10" height="9" viewBox="0 0 10 9"><path d="M0.5 1H9.5L5 6Z" fill="#aaa"/><path d="M0.5 7.5H9.5" stroke="#aaa" stroke-width="1"/></svg>
<div class="r" style="left:1324px;top:247px;width:1px;height:724px;background:repeating-linear-gradient(#d2d2d2 0 3px,transparent 3px 5px);"></div>
<div class="r" style="left:1320px;top:276px;width:1px;height:695px;background:#a9a9a9;"></div>
<div class="t" style="top:987.84px;font-size:12px;color:#4d4d4d;transform:scaleX(0.9127);transform-origin:0 0;left:192px;">Комментарий:</div>
<div class="r" style="left:269px;top:984px;width:1640px;height:20px;border:1px solid #a8a8a8;border-radius:3px;background:#fff;"></div>
<div class="r" style="left:14px;top:1023px;width:22px;height:20px;background:linear-gradient(#fff,#f2f2f2);border-radius:3px;box-shadow:0 0 0 1px rgba(0,0,0,0.06);"></div>
<svg class="r" style="left:14px;top:1023px" width="22" height="20" viewBox="14 1023 22 20"><rect x="22.6" y="1027.2" width="11" height="7.2" rx="1" stroke="#3d3d3d" stroke-width="1.2" fill="#f6f6f6"/><rect x="18.4" y="1031.4" width="11.5" height="7.1" rx="1" stroke="#3d3d3d" stroke-width="1.2" fill="#f2f2f2"/><path d="M24.2 1038.6V1040.5M21 1040.7H27.4" stroke="#3d3d3d" stroke-width="1.2"/></svg>
<div class="t" style="top:250.84px;font-size:12px;color:#4d4d4d;transform:scaleX(0.9141);transform-origin:0 0;left:1329px;">Платежный документ:</div>
<div class="r" style="left:1504px;top:247px;width:328px;height:20px;border:1px solid #d4d4d4;border-radius:3px;background:#fff;"></div>
<div class="r" style="left:1810px;top:248px;width:1px;height:18px;background:#d4d4d4;"></div>
<svg class="r" style="left:1816px;top:260px" width="10" height="3" viewBox="0 0 10 3" shape-rendering="crispEdges"><path d="M1 1h1v1h-1zM4 1h1v1h-1zM7 1h1v1h-1z" fill="#808080"/></svg>
<div class="t" style="top:276.84px;font-size:12px;color:#4d4d4d;transform:scaleX(0.9150);transform-origin:0 0;left:1329px;">Валюта контрагента:</div>
<div class="r" style="left:1504px;top:273px;width:328px;height:20px;border:1px solid #d4d4d4;border-radius:3px;background:#fff;"></div>
<div class="r" style="left:1789px;top:274px;width:1px;height:18px;background:#d4d4d4;"></div>
<div class="r" style="left:1810px;top:274px;width:1px;height:18px;background:#d4d4d4;"></div>
<div class="t" style="top:276.84px;font-size:12px;color:#333;transform:scaleX(0.8699);transform-origin:0 0;left:1507px;">руб.</div>
<svg class="r" style="left:1796.5px;top:282.2px" width="6" height="3.5" viewBox="0 0 6 3.5"><path d="M0 0H6L3.0 3.5Z" fill="#999"/></svg>
<svg class="r" style="left:1816px;top:278px" width="11" height="11" viewBox="0 0 11 11"><path d="M3.3 3.5H1.2V9.8H7.5V7.7" stroke="#444" stroke-width="1.3" fill="none"/><rect x="4.4" y="1.2" width="5.4" height="5.4" stroke="#444" stroke-width="1.3" fill="none"/></svg>
<div class="t" style="top:302.84px;font-size:12px;color:#4d4d4d;transform:scaleX(0.9110);transform-origin:0 0;left:1329px;">Сумма оплаты в валюте контр.:</div>
<div class="r" style="left:1504px;top:299px;width:328px;height:20px;border:1px solid #d4d4d4;border-radius:3px;background:#fff;"></div>
<div class="r" style="left:1810px;top:300px;width:1px;height:18px;background:#d4d4d4;"></div>
<div class="t" style="top:302.84px;font-size:12px;color:#333;transform:scaleX(0.8900);transform-origin:100% 0;right:128px;">12 000 000,00</div>
<svg class="r" style="left:1816px;top:304px" width="9" height="11" viewBox="0 0 9 11" shape-rendering="crispEdges"><path d="M0 0H9V11H0ZM1 1V10H8V1Z" fill="#939393" fill-rule="evenodd"/><path d="M1 2H8V3H1ZM2 4h1v1h-1zM4 4h1v1h-1zM6 4h1v1h-1zM2 6h1v1h-1zM4 6h1v1h-1zM2 8h1v1h-1zM4 8h1v1h-1zM6 6h1v3h-1z" fill="#939393"/></svg>
<div class="t" style="top:328.84px;font-size:12px;color:#4d4d4d;transform:scaleX(0.9119);transform-origin:0 0;left:1329px;">Ставка НДС:</div>
<div class="r" style="left:1504px;top:325px;width:328px;height:20px;border:1px solid #d4d4d4;border-radius:3px;background:#fff;"></div>
<div class="r" style="left:1810px;top:326px;width:1px;height:18px;background:#d4d4d4;"></div>
<div class="t" style="top:328.84px;font-size:12px;color:#333;transform:scaleX(0.8900);transform-origin:0 0;left:1507px;">20%</div>
<svg class="r" style="left:1817.5px;top:334.2px" width="6" height="3.5" viewBox="0 0 6 3.5"><path d="M0 0H6L3.0 3.5Z" fill="#999"/></svg>
<div class="t" style="top:354.84px;font-size:12px;color:#4d4d4d;transform:scaleX(0.9213);transform-origin:0 0;left:1329px;">В т.ч. НДС в валюте контрагента:</div>
<div class="r" style="left:1504px;top:351px;width:328px;height:20px;border:1px solid #d4d4d4;border-radius:3px;background:#fff;"></div>
<div class="r" style="left:1810px;top:352px;width:1px;height:18px;background:#d4d4d4;"></div>
<div class="t" style="top:354.84px;font-size:12px;color:#333;transform:scaleX(0.8900);transform-origin:100% 0;right:128px;">2 000 000,00</div>
<svg class="r" style="left:1816px;top:356px" width="9" height="11" viewBox="0 0 9 11" shape-rendering="crispEdges"><path d="M0 0H9V11H0ZM1 1V10H8V1Z" fill="#939393" fill-rule="evenodd"/><path d="M1 2H8V3H1ZM2 4h1v1h-1zM4 4h1v1h-1zM6 4h1v1h-1zM2 6h1v1h-1zM4 6h1v1h-1zM2 8h1v1h-1zM4 8h1v1h-1zM6 6h1v3h-1z" fill="#939393"/></svg>
<div class="t" style="top:380.84px;font-size:12px;color:#4d4d4d;transform:scaleX(0.9068);transform-origin:0 0;left:1329px;">Курс: Контрагент -&gt; Оплата::</div>
<div class="r" style="left:1504px;top:377px;width:328px;height:20px;border:1px solid #d4d4d4;border-radius:3px;background:#fff;"></div>
<div class="r" style="left:1810px;top:378px;width:1px;height:18px;background:#d4d4d4;"></div>
<div class="t" style="top:380.84px;font-size:12px;color:#333;transform:scaleX(0.8900);transform-origin:100% 0;right:128px;">0,0000</div>
<svg class="r" style="left:1816px;top:382px" width="9" height="11" viewBox="0 0 9 11" shape-rendering="crispEdges"><path d="M0 0H9V11H0ZM1 1V10H8V1Z" fill="#939393" fill-rule="evenodd"/><path d="M1 2H8V3H1ZM2 4h1v1h-1zM4 4h1v1h-1zM6 4h1v1h-1zM2 6h1v1h-1zM4 6h1v1h-1zM2 8h1v1h-1zM4 8h1v1h-1zM6 6h1v3h-1z" fill="#939393"/></svg>
<div class="t" style="top:406.84px;font-size:12px;color:#4d4d4d;transform:scaleX(0.9314);transform-origin:0 0;left:1329px;">Курс: Контрагент -&gt; ДЛ ::</div>
<div class="r" style="left:1504px;top:403px;width:328px;height:20px;border:1px solid #d4d4d4;border-radius:3px;background:#fff;"></div>
<div class="r" style="left:1810px;top:404px;width:1px;height:18px;background:#d4d4d4;"></div>
<div class="t" style="top:406.84px;font-size:12px;color:#333;transform:scaleX(0.8900);transform-origin:100% 0;right:128px;">1,0000</div>
<svg class="r" style="left:1816px;top:408px" width="9" height="11" viewBox="0 0 9 11" shape-rendering="crispEdges"><path d="M0 0H9V11H0ZM1 1V10H8V1Z" fill="#939393" fill-rule="evenodd"/><path d="M1 2H8V3H1ZM2 4h1v1h-1zM4 4h1v1h-1zM6 4h1v1h-1zM2 6h1v1h-1zM4 6h1v1h-1zM2 8h1v1h-1zM4 8h1v1h-1zM6 6h1v3h-1z" fill="#939393"/></svg>
<div class="t" style="top:432.84px;font-size:12px;color:#4d4d4d;transform:scaleX(0.9328);transform-origin:0 0;left:1329px;">Дата оплаты по выписке:</div>
<div class="r" style="left:1504px;top:429px;width:328px;height:20px;border:1px solid #d4d4d4;border-radius:3px;background:#fff;"></div>
<div class="r" style="left:1810px;top:430px;width:1px;height:18px;background:#d4d4d4;"></div>
<div class="t" style="top:432.84px;font-size:12px;color:#333;transform:scaleX(0.8900);transform-origin:0 0;left:1513px;"> .  .</div>
<svg class="r" style="left:1816px;top:434px" width="9" height="10" viewBox="0 0 9 10" shape-rendering="crispEdges"><path d="M0 1H9V10H0ZM1 4V9H8V4Z" fill="#888" fill-rule="evenodd"/><path d="M2 0h1v1h-1zM6 0h1v1h-1z" fill="#888"/><path d="M2 5h1v1h-1zM4 5h1v1h-1zM6 5h1v1h-1zM2 7h1v1h-1zM4 7h1v1h-1zM6 7h1v1h-1z" fill="#888"/></svg>
<div class="t" style="top:458.84px;font-size:12px;color:#4d4d4d;transform:scaleX(0.8976);transform-origin:0 0;left:1329px;">Валюта оплаты:</div>
<div class="r" style="left:1504px;top:455px;width:328px;height:20px;border:1px solid #d4d4d4;border-radius:3px;background:#fff;"></div>
<div class="r" style="left:1789px;top:456px;width:1px;height:18px;background:#d4d4d4;"></div>
<div class="r" style="left:1810px;top:456px;width:1px;height:18px;background:#d4d4d4;"></div>
<div class="t" style="top:458.84px;font-size:12px;color:#333;transform:scaleX(0.8699);transform-origin:0 0;left:1507px;">руб.</div>
<svg class="r" style="left:1796.5px;top:464.2px" width="6" height="3.5" viewBox="0 0 6 3.5"><path d="M0 0H6L3.0 3.5Z" fill="#999"/></svg>
<svg class="r" style="left:1816px;top:460px" width="11" height="11" viewBox="0 0 11 11"><path d="M3.3 3.5H1.2V9.8H7.5V7.7" stroke="#444" stroke-width="1.3" fill="none"/><rect x="4.4" y="1.2" width="5.4" height="5.4" stroke="#444" stroke-width="1.3" fill="none"/></svg>
<div class="t" style="top:484.84px;font-size:12px;color:#4d4d4d;transform:scaleX(0.9066);transform-origin:0 0;left:1329px;">Сумма в валюте оплаты:</div>
<div class="r" style="left:1504px;top:481px;width:328px;height:20px;border:1px solid #d4d4d4;border-radius:3px;background:#fff;"></div>
<div class="r" style="left:1810px;top:482px;width:1px;height:18px;background:#d4d4d4;"></div>
<div class="t" style="top:484.84px;font-size:12px;color:#333;transform:scaleX(0.8900);transform-origin:100% 0;right:128px;">0,00</div>
<svg class="r" style="left:1816px;top:486px" width="9" height="11" viewBox="0 0 9 11" shape-rendering="crispEdges"><path d="M0 0H9V11H0ZM1 1V10H8V1Z" fill="#939393" fill-rule="evenodd"/><path d="M1 2H8V3H1ZM2 4h1v1h-1zM4 4h1v1h-1zM6 4h1v1h-1zM2 6h1v1h-1zM4 6h1v1h-1zM2 8h1v1h-1zM4 8h1v1h-1zM6 6h1v3h-1z" fill="#939393"/></svg>
<div class="t" style="top:510.84px;font-size:12px;color:#4d4d4d;transform:scaleX(0.9129);transform-origin:0 0;left:1365px;">В т.ч. НДС::</div>
<div class="r" style="left:1504px;top:507px;width:328px;height:20px;border:1px solid #d4d4d4;border-radius:3px;background:#fff;"></div>
<div class="r" style="left:1810px;top:508px;width:1px;height:18px;background:#d4d4d4;"></div>
<div class="t" style="top:510.84px;font-size:12px;color:#333;transform:scaleX(0.8900);transform-origin:100% 0;right:128px;">0,00</div>
<svg class="r" style="left:1816px;top:512px" width="9" height="11" viewBox="0 0 9 11" shape-rendering="crispEdges"><path d="M0 0H9V11H0ZM1 1V10H8V1Z" fill="#939393" fill-rule="evenodd"/><path d="M1 2H8V3H1ZM2 4h1v1h-1zM4 4h1v1h-1zM6 4h1v1h-1zM2 6h1v1h-1zM4 6h1v1h-1zM2 8h1v1h-1zM4 8h1v1h-1zM6 6h1v3h-1z" fill="#939393"/></svg>
<div class="t" style="top:536.84px;font-size:12px;color:#4d4d4d;transform:scaleX(0.9148);transform-origin:0 0;left:1329px;">Назначение платежа:</div>
<div class="r" style="left:1504px;top:533px;width:328px;height:20px;border:1px solid #d4d4d4;border-radius:3px;background:#fff;"></div>
<div class="t" style="top:560.84px;font-size:12px;color:#4d4d4d;transform:scaleX(0.9470);transform-origin:0 0;left:1329px;">Вне суммы ДЛ:</div>
<div class="r" style="left:1505px;top:560px;width:13px;height:13px;border:1px solid #c8c8c8;border-radius:2px;background:#fff;"></div>
<div class="t" style="top:581.15px;font-size:14px;color:#1e9b4b;transform:scaleX(0.9636);transform-origin:0 0;left:1329px;">ФСБУ</div>
<div class="r" style="left:1329px;top:600px;width:3px;height:20px;background:#1e9b4b;"></div>
<div class="t" style="top:603.84px;font-size:12px;color:#4d4d4d;transform:scaleX(0.9284);transform-origin:0 0;left:1337px;">Влияет на стоимость ПЛ (ФСБУ):</div>
<div class="r" style="left:1514px;top:603px;width:13px;height:13px;border:1px solid #d8d8d8;border-radius:2px;background:#fff;"></div>
<svg class="r" style="left:1515px;top:604px" width="11" height="11" viewBox="0 0 11 11"><path d="M2 5.5L4.5 8.3L9.5 1.8" stroke="#c4c4c4" stroke-width="1.3" fill="none"/></svg>
<div class="t" style="top:603.84px;font-size:12px;color:#4d4d4d;transform:scaleX(0.9211);transform-origin:0 0;left:1536px;">Вид компонента договора (ФСБУ):</div>
<div class="r" style="left:1718px;top:600px;width:182px;height:20px;border:1px solid #d4d4d4;border-radius:3px;background:#fff;"></div>
<div class="r" style="left:1878px;top:601px;width:1px;height:18px;background:#d4d4d4;"></div>
<div class="t" style="top:603.84px;font-size:12px;color:#333;transform:scaleX(0.8872);transform-origin:0 0;left:1721px;">Арендный</div>
<svg class="r" style="left:1886.0px;top:608.2px" width="6" height="3.5" viewBox="0 0 6 3.5"><path d="M0 0H6L3.0 3.5Z" fill="#999"/></svg>
<div class="t" style="top:633.84px;font-size:12px;color:#1e9b4b;transform:scaleX(0.9859);transform-origin:0 0;font-weight:bold;left:1329px;">Составляющие расхода</div>
<div class="t" style="top:655.84px;font-size:12px;color:#4d4d4d;transform:scaleX(0.9221);transform-origin:0 0;left:1329px;">Основная задолженность:</div>
<div class="r" style="left:1504px;top:652px;width:328px;height:20px;border:1px solid #d4d4d4;border-radius:3px;background:#fff;"></div>
<div class="r" style="left:1810px;top:653px;width:1px;height:18px;background:#d4d4d4;"></div>
<div class="t" style="top:655.84px;font-size:12px;color:#333;transform:scaleX(0.8900);transform-origin:100% 0;right:128px;">10 000 000,00</div>
<svg class="r" style="left:1816px;top:657px" width="9" height="11" viewBox="0 0 9 11" shape-rendering="crispEdges"><path d="M0 0H9V11H0ZM1 1V10H8V1Z" fill="#939393" fill-rule="evenodd"/><path d="M1 2H8V3H1ZM2 4h1v1h-1zM4 4h1v1h-1zM6 4h1v1h-1zM2 6h1v1h-1zM4 6h1v1h-1zM2 8h1v1h-1zM4 8h1v1h-1zM6 6h1v3h-1z" fill="#939393"/></svg>
<div class="t" style="top:678.84px;font-size:12px;color:#4d4d4d;transform:scaleX(0.8986);transform-origin:0 0;left:1338px;">В том числе:</div>
<div class="t" style="top:700.84px;font-size:12px;color:#4d4d4d;transform:scaleX(0.9170);transform-origin:100% 0;right:436px;">по приобретению ПЛ:</div>
<div class="r" style="left:1572px;top:697px;width:328px;height:20px;border:1px solid #d4d4d4;border-radius:3px;background:#fff;"></div>
<div class="r" style="left:1878px;top:698px;width:1px;height:18px;background:#d4d4d4;"></div>
<div class="t" style="top:700.84px;font-size:12px;color:#333;transform:scaleX(0.8900);transform-origin:100% 0;right:60px;">10 000 000,00</div>
<svg class="r" style="left:1884px;top:702px" width="9" height="11" viewBox="0 0 9 11" shape-rendering="crispEdges"><path d="M0 0H9V11H0ZM1 1V10H8V1Z" fill="#939393" fill-rule="evenodd"/><path d="M1 2H8V3H1ZM2 4h1v1h-1zM4 4h1v1h-1zM6 4h1v1h-1zM2 6h1v1h-1zM4 6h1v1h-1zM2 8h1v1h-1zM4 8h1v1h-1zM6 6h1v3h-1z" fill="#939393"/></svg>
<div class="t" style="top:726.84px;font-size:12px;color:#4d4d4d;transform:scaleX(0.9087);transform-origin:100% 0;right:436px;">по страхованию:</div>
<div class="r" style="left:1572px;top:723px;width:328px;height:20px;border:1px solid #d4d4d4;border-radius:3px;background:#fff;"></div>
<div class="r" style="left:1878px;top:724px;width:1px;height:18px;background:#d4d4d4;"></div>
<div class="t" style="top:726.84px;font-size:12px;color:#333;transform:scaleX(0.8900);transform-origin:100% 0;right:60px;">0,00</div>
<svg class="r" style="left:1884px;top:728px" width="9" height="11" viewBox="0 0 9 11" shape-rendering="crispEdges"><path d="M0 0H9V11H0ZM1 1V10H8V1Z" fill="#939393" fill-rule="evenodd"/><path d="M1 2H8V3H1ZM2 4h1v1h-1zM4 4h1v1h-1zM6 4h1v1h-1zM2 6h1v1h-1zM4 6h1v1h-1zM2 8h1v1h-1zM4 8h1v1h-1zM6 6h1v3h-1z" fill="#939393"/></svg>
<div class="t" style="top:752.84px;font-size:12px;color:#4d4d4d;transform:scaleX(0.9133);transform-origin:100% 0;right:436px;">по налогу на имущество:</div>
<div class="r" style="left:1572px;top:749px;width:328px;height:20px;border:1px solid #d4d4d4;border-radius:3px;background:#fff;"></div>
<div class="r" style="left:1878px;top:750px;width:1px;height:18px;background:#d4d4d4;"></div>
<div class="t" style="top:752.84px;font-size:12px;color:#333;transform:scaleX(0.8900);transform-origin:100% 0;right:60px;">0,00</div>
<svg class="r" style="left:1884px;top:754px" width="9" height="11" viewBox="0 0 9 11" shape-rendering="crispEdges"><path d="M0 0H9V11H0ZM1 1V10H8V1Z" fill="#939393" fill-rule="evenodd"/><path d="M1 2H8V3H1ZM2 4h1v1h-1zM4 4h1v1h-1zM6 4h1v1h-1zM2 6h1v1h-1zM4 6h1v1h-1zM2 8h1v1h-1zM4 8h1v1h-1zM6 6h1v3h-1z" fill="#939393"/></svg>
<div class="t" style="top:778.84px;font-size:12px;color:#4d4d4d;transform:scaleX(0.9111);transform-origin:100% 0;right:436px;">по транспортному налогу:</div>
<div class="r" style="left:1572px;top:775px;width:328px;height:20px;border:1px solid #d4d4d4;border-radius:3px;background:#fff;"></div>
<div class="r" style="left:1878px;top:776px;width:1px;height:18px;background:#d4d4d4;"></div>
<div class="t" style="top:778.84px;font-size:12px;color:#333;transform:scaleX(0.8900);transform-origin:100% 0;right:60px;">0,00</div>
<svg class="r" style="left:1884px;top:780px" width="9" height="11" viewBox="0 0 9 11" shape-rendering="crispEdges"><path d="M0 0H9V11H0ZM1 1V10H8V1Z" fill="#939393" fill-rule="evenodd"/><path d="M1 2H8V3H1ZM2 4h1v1h-1zM4 4h1v1h-1zM6 4h1v1h-1zM2 6h1v1h-1zM4 6h1v1h-1zM2 8h1v1h-1zM4 8h1v1h-1zM6 6h1v3h-1z" fill="#939393"/></svg>
<div class="t" style="top:804.84px;font-size:12px;color:#4d4d4d;transform:scaleX(0.9255);transform-origin:100% 0;right:436px;">по прочим обяз. платежам:</div>
<div class="r" style="left:1572px;top:801px;width:328px;height:20px;border:1px solid #d4d4d4;border-radius:3px;background:#fff;"></div>
<div class="r" style="left:1878px;top:802px;width:1px;height:18px;background:#d4d4d4;"></div>
<div class="t" style="top:804.84px;font-size:12px;color:#333;transform:scaleX(0.8900);transform-origin:100% 0;right:60px;">0,00</div>
<svg class="r" style="left:1884px;top:806px" width="9" height="11" viewBox="0 0 9 11" shape-rendering="crispEdges"><path d="M0 0H9V11H0ZM1 1V10H8V1Z" fill="#939393" fill-rule="evenodd"/><path d="M1 2H8V3H1ZM2 4h1v1h-1zM4 4h1v1h-1zM6 4h1v1h-1zM2 6h1v1h-1zM4 6h1v1h-1zM2 8h1v1h-1zM4 8h1v1h-1zM6 6h1v3h-1z" fill="#939393"/></svg>
<div class="t" style="top:830.84px;font-size:12px;color:#4d4d4d;transform:scaleX(0.9363);transform-origin:0 0;left:1329px;">По НДС:</div>
<div class="r" style="left:1504px;top:827px;width:328px;height:20px;border:1px solid #d4d4d4;border-radius:3px;background:#fff;"></div>
<div class="r" style="left:1810px;top:828px;width:1px;height:18px;background:#d4d4d4;"></div>
<div class="t" style="top:830.84px;font-size:12px;color:#333;transform:scaleX(0.8900);transform-origin:100% 0;right:128px;">2 000 000,00</div>
<svg class="r" style="left:1816px;top:832px" width="9" height="11" viewBox="0 0 9 11" shape-rendering="crispEdges"><path d="M0 0H9V11H0ZM1 1V10H8V1Z" fill="#939393" fill-rule="evenodd"/><path d="M1 2H8V3H1ZM2 4h1v1h-1zM4 4h1v1h-1zM6 4h1v1h-1zM2 6h1v1h-1zM4 6h1v1h-1zM2 8h1v1h-1zM4 8h1v1h-1zM6 6h1v3h-1z" fill="#939393"/></svg>
<div class="t" style="top:856.84px;font-size:12px;color:#4d4d4d;transform:scaleX(0.9125);transform-origin:0 0;left:1329px;">По доп. счетам:</div>
<div class="r" style="left:1504px;top:853px;width:328px;height:20px;border:1px solid #d4d4d4;border-radius:3px;background:#fff;"></div>
<div class="r" style="left:1810px;top:854px;width:1px;height:18px;background:#d4d4d4;"></div>
<div class="t" style="top:856.84px;font-size:12px;color:#333;transform:scaleX(0.8900);transform-origin:100% 0;right:128px;">0,00</div>
<svg class="r" style="left:1816px;top:858px" width="9" height="11" viewBox="0 0 9 11" shape-rendering="crispEdges"><path d="M0 0H9V11H0ZM1 1V10H8V1Z" fill="#939393" fill-rule="evenodd"/><path d="M1 2H8V3H1ZM2 4h1v1h-1zM4 4h1v1h-1zM6 4h1v1h-1zM2 6h1v1h-1zM4 6h1v1h-1zM2 8h1v1h-1zM4 8h1v1h-1zM6 6h1v3h-1z" fill="#939393"/></svg>
</body></html>
